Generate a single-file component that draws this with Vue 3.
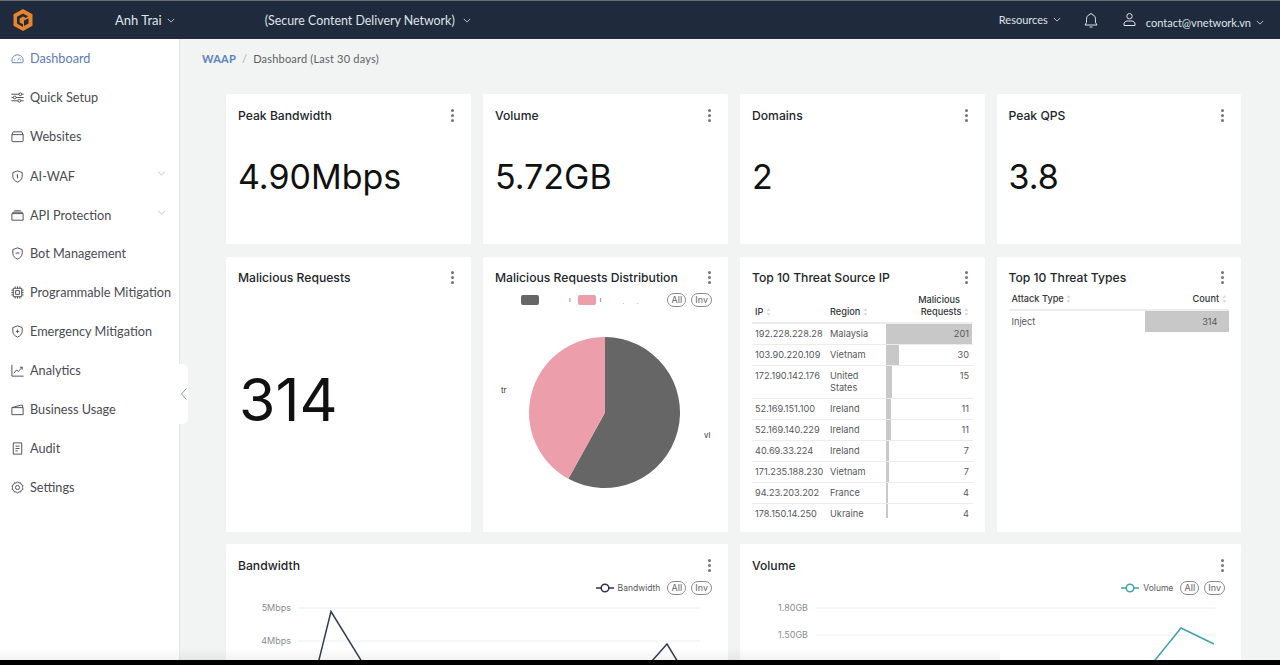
<script setup>
const navItems = [
  { label: 'Dashboard', active: true, icon: ['M2.500 12.500a6 6 0 1 1 11 0z', 'M8 10l2.500-3', 'M4.500 9.500h1', 'M10.800 9.500h1'] },
  { label: 'Quick Setup', icon: ['M1.500 4.500h8', 'M12.500 4.500h2', 'M1.500 8h2', 'M6.500 8h8', 'M1.500 11.500h7', 'M11.500 11.500h3', 'M11 3a1.500 1.500 0 1 0 0 3 1.500 1.500 0 0 0 0-3z', 'M5 6.500a1.500 1.500 0 1 0 0 3 1.500 1.500 0 0 0 0-3z', 'M10 10a1.500 1.500 0 1 0 0 3 1.500 1.500 0 0 0 0-3z'] },
  { label: 'Websites', icon: ['M2 6h12v6.500a1 1 0 0 1-1 1H3a1 1 0 0 1-1-1z', 'M2 6l1.500-3h9L14 6'] },
  { label: 'AI-WAF', caret: true, icon: ['M8 2l5 1.800v4c0 3-2.200 5-5 6.200-2.800-1.200-5-3.200-5-6.200v-4z', 'M7.200 6.500L8 6v4'] },
  { label: 'API Protection', caret: true, icon: ['M2 6h12v7H2z', 'M3 6V4.500h10V6', 'M4.500 3h7'] },
  { label: 'Bot Management', icon: ['M8 2l5 1.800v4c0 3-2.200 5-5 6.200-2.800-1.200-5-3.200-5-6.200v-4z', 'M6 7.500h4'] },
  { label: 'Programmable Mitigation', icon: ['M3.500 3.500h9v9h-9z', 'M6 6h4v4H6z', 'M5.500 1.500v2', 'M8 1.500v2', 'M10.500 1.500v2', 'M5.500 12.500v2', 'M8 12.500v2', 'M10.500 12.500v2', 'M1.500 5.500h2', 'M1.500 8h2', 'M1.500 10.500h2', 'M12.500 5.500h2', 'M12.500 8h2', 'M12.500 10.500h2'] },
  { label: 'Emergency Mitigation', icon: ['M8 2l5 1.800v4c0 3-2.200 5-5 6.200-2.800-1.200-5-3.200-5-6.200v-4z', 'M8 6v3.500', 'M6.200 7.800h3.600'] },
  { label: 'Analytics', icon: ['M2 2v12h12.500', 'M4 11l3-3.500 2 1.500 4-4.500', 'M10.500 4.500H13V7'] },
  { label: 'Business Usage', icon: ['M2 6h12v7.500H2z', 'M2 6l9-2.500h2.500V6'] },
  { label: 'Audit', icon: ['M3.500 2h9v12h-9z', 'M5.800 5.500h4.400', 'M5.800 8h4.400', 'M5.800 10.500h2.500'] },
  { label: 'Settings', icon: ['M8 1.800l1.300 1.500 2-.3.700 1.900 1.800.9-.5 2.200.5 2-1.800 1-.7 1.800-2-.2L8 14.200l-1.300-1.600-2 .2-.7-1.800-1.800-1 .5-2-.5-2.200 1.800-.9.700-1.900 2 .3z', 'M8 5.800a2.200 2.200 0 1 0 0 4.400 2.200 2.200 0 0 0 0-4.400z'] },
]

const stats = [
  { title: 'Peak Bandwidth', value: '4.90Mbps' },
  { title: 'Volume', value: '5.72GB' },
  { title: 'Domains', value: '2' },
  { title: 'Peak QPS', value: '3.8' },
]

const ipRows = [
  { ip: '192.228.228.28', region: 'Malaysia', count: 201 },
  { ip: '103.90.220.109', region: 'Vietnam', count: 30 },
  { ip: '172.190.142.176', region: 'United States', count: 15 },
  { ip: '52.169.151.100', region: 'Ireland', count: 11 },
  { ip: '52.169.140.229', region: 'Ireland', count: 11 },
  { ip: '40.69.33.224', region: 'Ireland', count: 7 },
  { ip: '171.235.188.230', region: 'Vietnam', count: 7 },
  { ip: '94.23.203.202', region: 'France', count: 4 },
  { ip: '178.150.14.250', region: 'Ukraine', count: 4 },
]
const barWidth = (n) => (n / 201) * 100 + '%'
</script>

<template>
  <div class="page">
    <header class="topbar">
      <svg class="logo" width="24" height="26" viewBox="0 0 24 26">
        <path d="M12 2l9.500 5.300v11.400L12 24l-9.500-5.300V7.300z" fill="#e8842c" />
        <path d="M12 6.500l5 2.800-2 1.800-3-1.600-3.400 1.900v4l3.400 1.900v2.700l-6-3.400V9.800z" fill="#1f2b3d" />
        <path d="M13 13.500l4.500-2.300v5.300L13 19z" fill="#1f2b3d" />
      </svg>
      <button class="top-btn tenant">Anh Trai
        <svg class="chev" viewBox="0 0 10 6"><path d="M1 1l4 4 4-4" /></svg>
      </button>
      <button class="top-btn product">(Secure Content Delivery Network)
        <svg class="chev" viewBox="0 0 10 6"><path d="M1 1l4 4 4-4" /></svg>
      </button>
      <div class="top-right">
        <button class="top-btn small res">Resources
          <svg class="chev" viewBox="0 0 10 6"><path d="M1 1l4 4 4-4" /></svg>
        </button>
        <svg class="bell" width="16" height="17" viewBox="0 0 16 17"><path d="M8 1.500a1 1 0 0 1 1 1c2.500.500 3.500 2.500 3.500 5v3l1.500 2.500H2L3.500 10.500v-3c0-2.500 1-4.500 3.500-5a1 1 0 0 1 1-1zM6.500 15h3" /></svg>
        <svg class="user" width="15" height="15" viewBox="0 0 15 15"><path d="M7.500 1.500a2.700 2.700 0 1 0 0 5.400 2.700 2.700 0 0 0 0-5.400zM2 13.500v-1.500c0-1.500 1.500-3 3-3h5c1.500 0 3 1.500 3 3v1.500z" /></svg>
        <button class="top-btn small mail">contact@vnetwork.vn
          <svg class="chev" viewBox="0 0 10 6"><path d="M1 1l4 4 4-4" /></svg>
        </button>
      </div>
    </header>

    <div class="body">
      <nav class="sidebar">
        <a v-for="item in navItems" :key="item.label" class="nav-item" :class="{ active: item.active, 'has-caret': item.caret }">
          <svg class="nav-icon" viewBox="0 0 16 16"><path v-for="d in item.icon" :key="d" :d="d" /></svg>
          <span class="nav-label">{{ item.label }}</span>
          <svg v-if="item.caret" class="nav-caret" viewBox="0 0 10 6"><path d="M1 1l4 4 4-4" /></svg>
        </a>
        <div class="collapse">
          <svg width="6" height="12" viewBox="0 0 6 12"><path d="M5.500 .500L.500 6l5 5.500" /></svg>
        </div>
      </nav>

      <main class="main">
        <div class="crumbs">
          <span class="crumb-root">WAAP</span>
          <span class="crumb-sep">/</span>
          <span class="crumb-cur">Dashboard (Last 30 days)</span>
        </div>

        <div class="grid">
          <section v-for="s in stats" :key="s.title" class="card stat">
            <div class="card-head"><h3>{{ s.title }}</h3><span class="kebab"><i /><i /><i /></span></div>
            <div class="stat-value">{{ s.value }}</div>
          </section>

          <section class="card tall">
            <div class="card-head"><h3>Malicious Requests</h3><span class="kebab"><i /><i /><i /></span></div>
            <div class="big-value">314</div>
          </section>

          <section class="card tall">
            <div class="card-head"><h3>Malicious Requests Distribution</h3><span class="kebab"><i /><i /><i /></span></div>
            <div class="legend pie-legend">
              <span class="swatch gray" />
              <span class="tick first">ı</span>
              <span class="swatch pink" />
              <span class="tick">ı</span>
              <span class="tick faint one">.</span>
              <span class="tick faint two">.</span>
              <span class="legend-spacer" />
              <span class="pill">All</span>
              <span class="pill">Inv</span>
            </div>
            <svg class="pie" width="221" height="200" viewBox="0 0 221 200">
              <path d="M110 14A75.500 75.500 0 1 1 73.400 155.800L110 89.500z" fill="#666666" />
              <path d="M110 14A75.500 75.500 0 0 0 73.400 155.800L110 89.500z" fill="#ec9fab" />
              <text x="6" y="70" class="pie-label">tr</text>
              <text x="209" y="115" class="pie-label">vl</text>
            </svg>
          </section>

          <section class="card tall">
            <div class="card-head"><h3>Top 10 Threat Source IP</h3><span class="kebab"><i /><i /><i /></span></div>
            <div class="table ip-table">
              <div class="tr th">
                <div class="td c-ip">IP <svg class="sort" viewBox="0 0 6 9"><path d="M3 0l2.500 3h-5zM3 9L.500 6h5z" /></svg></div>
                <div class="td c-region">Region <svg class="sort" viewBox="0 0 6 9"><path d="M3 0l2.500 3h-5zM3 9L.500 6h5z" /></svg></div>
                <div class="td c-count"><span class="head-line">Malicious</span><br />Requests <svg class="sort" viewBox="0 0 6 9"><path d="M3 0l2.500 3h-5zM3 9L.500 6h5z" /></svg></div>
              </div>
              <div v-for="r in ipRows" :key="r.ip" class="tr">
                <div class="td c-ip">{{ r.ip }}</div>
                <div class="td c-region">{{ r.region }}</div>
                <div class="td c-count">
                  <span class="bar" :style="{ width: barWidth(r.count) }" />
                  <span class="num">{{ r.count }}</span>
                </div>
              </div>
            </div>
          </section>

          <section class="card tall">
            <div class="card-head"><h3>Top 10 Threat Types</h3><span class="kebab"><i /><i /><i /></span></div>
            <div class="table type-table">
              <div class="tr th">
                <div class="td c-type">Attack Type <svg class="sort" viewBox="0 0 6 9"><path d="M3 0l2.500 3h-5zM3 9L.500 6h5z" /></svg></div>
                <div class="td c-count2">Count <svg class="sort" viewBox="0 0 6 9"><path d="M3 0l2.500 3h-5zM3 9L.500 6h5z" /></svg></div>
              </div>
              <div class="tr">
                <div class="td c-type">Inject</div>
                <div class="td c-count2"><span class="bar full" /><span class="num">314</span></div>
              </div>
            </div>
          </section>

          <section class="card wide">
            <div class="card-head"><h3>Bandwidth</h3><span class="kebab"><i /><i /><i /></span></div>
            <div class="legend chart-legend">
              <svg width="18" height="10" viewBox="0 0 18 10"><path d="M0 5h5M13 5h5" stroke="#2c3350" stroke-width="1.500" /><circle cx="9" cy="5" r="3.800" fill="#fff" stroke="#2c3350" stroke-width="1.500" /></svg>
              <span class="legend-text">Bandwidth</span>
              <span class="pill">All</span>
              <span class="pill">Inv</span>
            </div>
            <svg class="chart" width="486" height="70" viewBox="0 0 486 70">
              <line x1="60" y1="8" x2="462" y2="8" class="grid-line" />
              <line x1="60" y1="41" x2="462" y2="41" class="grid-line" />
              <text x="53" y="11" class="axis">5Mbps</text>
              <text x="53" y="44" class="axis">4Mbps</text>
              <polyline points="76,80 93,11.500 129,70" class="line navy" />
              <polyline points="406,70 429,44 446,72" class="line navy" />
            </svg>
          </section>

          <section class="card wide">
            <div class="card-head"><h3>Volume</h3><span class="kebab"><i /><i /><i /></span></div>
            <div class="legend chart-legend">
              <svg width="18" height="10" viewBox="0 0 18 10"><path d="M0 5h5M13 5h5" stroke="#3ea2ad" stroke-width="1.500" /><circle cx="9" cy="5" r="3.800" fill="#fff" stroke="#3ea2ad" stroke-width="1.500" /></svg>
              <span class="legend-text">Volume</span>
              <span class="pill">All</span>
              <span class="pill">Inv</span>
            </div>
            <svg class="chart" width="476" height="70" viewBox="0 0 476 70">
              <line x1="64" y1="8" x2="463" y2="8" class="grid-line" />
              <line x1="64" y1="35" x2="463" y2="35" class="grid-line" />
              <text x="56" y="11" class="axis">1.80GB</text>
              <text x="56" y="38" class="axis">1.50GB</text>
              <polyline points="395,70 429,28 462,44" class="line teal" />
            </svg>
          </section>
        </div>
      </main>
    </div>
    <div class="bottom-strip" />
  </div>
</template>

<style>
html, body { margin: 0; padding: 0; overflow: hidden; }
</style>

<style scoped>
.page { width: 1280px; height: 665px; display: flex; flex-direction: column; overflow: hidden; font-family: Inter, "Liberation Sans", sans-serif; background: #f2f4f4; }

.topbar { flex: 0 0 39px; box-sizing: border-box; height: 39px; background: #1f2b3d; border-top: 1px solid #6b6f75; display: flex; align-items: center; color: #dfe3e8; padding-left: 11px; font-family: Lato, "Open Sans", sans-serif; }
.logo { flex: none; margin-top: -1px; }
.top-btn { background: none; border: 0; padding: 0; color: inherit; font: inherit; font-size: 13px; display: inline-flex; align-items: center; gap: 5px; white-space: nowrap; }
.tenant { margin-left: 80px; }
.product { margin-left: 90px; gap: 8px; font-size: 12.400px; }
.chev { width: 8px; height: 5px; fill: none; stroke: currentColor; stroke-width: 1; }
.top-right { margin-left: auto; padding-right: 16px; display: flex; align-items: center; }
.small { font-size: 11px; }
.res { margin-top: -2px; }
.bell { margin-left: 22px; fill: none; stroke: #dfe3e8; stroke-width: 1; }
.user { margin-left: 23px; fill: none; stroke: #dfe3e8; stroke-width: 1; margin-top: -2px; }
.mail { margin-left: 9px; margin-top: 4px; }

.body { flex: 1; min-height: 0; display: flex; }
.sidebar { position: relative; flex: 0 0 180px; box-sizing: border-box; width: 180px; background: #fff; border-right: 1px solid #e6e9e9; font-family: Lato, "Open Sans", sans-serif; z-index: 1; }
.nav-item { box-sizing: border-box; height: 39px; padding-bottom: 1px; display: flex; align-items: center; padding-left: 10px; color: #4a4c52; font-size: 12.700px; white-space: nowrap; }
.nav-item.has-caret { padding-bottom: 0; padding-top: 1px; }
.nav-item.active { color: #5d7cb3; }
.nav-icon { width: 15px; height: 15px; flex: none; margin-right: 5px; fill: none; stroke: currentColor; stroke-width: 1; }
.nav-label { flex: none; }
.nav-caret { width: 9px; height: 5px; margin-left: auto; margin-right: 13px; margin-top: -6px; fill: none; stroke: #b4b8bc; stroke-width: 1; }
.collapse { position: absolute; left: 179px; top: 325px; width: 9px; height: 60px; background: #fff; border-radius: 0 6px 6px 0; display: flex; align-items: center; justify-content: center; }
.collapse svg { fill: none; stroke: #8b9096; stroke-width: 1; }

.main { flex: 1; min-width: 0; overflow: hidden; box-sizing: border-box; padding-left: 22px; }
.crumbs { height: 55px; padding-top: 13px; box-sizing: border-box; font-size: 11px; line-height: 14px; display: flex; gap: 6px; font-family: Lato, "Open Sans", sans-serif; letter-spacing: .2px; }
.crumb-root { color: #5d7fbc; font-weight: 700; }
.crumb-sep { color: #a8adb2; }
.crumb-cur { color: #5c5f64; }

.grid { margin-left: 24px; width: 1015px; display: grid; grid-template-columns: 245px 245px 244.500px 244.500px; column-gap: 12px; row-gap: 12.500px; grid-template-rows: 150px 275px 200px; }
.card { background: #fff; border-radius: 2px; box-sizing: border-box; padding: 12px; min-width: 0; display: flex; flex-direction: column; overflow: hidden; }
.wide { grid-column: span 2; }
.card-head { display: flex; align-items: center; justify-content: space-between; height: 18px; flex: none; }
.card-head h3 { margin: 0; padding-top: 1px; font-size: 12.150px; line-height: 18px; font-weight: 500; color: #23262b; white-space: nowrap; }
.kebab { display: flex; flex-direction: column; gap: 2px; margin-right: 5px; }
.kebab i { display: block; width: 3px; height: 3px; border-radius: 50%; background: #777; }
.stat-value { margin-top: 31px; font-size: 34px; line-height: 44px; color: #111; }
.big-value { flex: 1; display: flex; align-items: center; padding-bottom: 8px; padding-left: 1px; font-size: 59px; color: #111; }

.legend { display: flex; align-items: center; flex: none; }
.pie-legend { height: 14px; margin-top: 6px; padding-left: 26px; padding-right: 4px; }
.swatch { width: 18px; height: 10px; border-radius: 2px; }
.gray { background: #666; }
.pink { background: #ec9fab; }
.tick { font-size: 7px; color: #555; margin-left: 4px; }
.tick.first { margin-left: 30px; margin-right: 7px; }
.tick.faint { color: #aaa; margin-top: 4px; }
.tick.faint.one { margin-left: 21px; }
.tick.faint.two { margin-left: 12px; }
.legend-spacer { flex: 1; }
.pill { box-sizing: border-box; height: 14px; min-width: 19px; padding: 0 3px; margin-left: 5px; border: 1px solid #8a8a8a; border-radius: 7px; font-size: 9px; line-height: 12px; color: #666; text-align: center; }
.pie { flex: none; margin-top: 16px; }
.pie-label { font-size: 8px; fill: #333; }

.table { margin-top: 3px; font-size: 9.200px; color: #55585c; overflow: hidden; }
.ip-table { height: 228px; }
.tr { display: flex; border-bottom: 1px solid #ececec; }
.th { color: #33363a; font-weight: 500; border-bottom: 2px solid #ededed; align-items: flex-end; }
.td { box-sizing: border-box; padding: 4px 3px; line-height: 12px; position: relative; }
.c-ip { flex: 0 0 75px; white-space: nowrap; }
.c-region { flex: 0 0 59px; }
.c-count { flex: 0 0 86px; text-align: right; padding-right: 3px; }
.head-line { margin-right: 9px; }
.c-type { flex: 0 0 136px; }
.c-count2 { flex: 0 0 85px; text-align: right; padding-right: 5px; }
.type-table { margin-top: 2px; }
.type-table .td { padding: 4px 3px; }
.type-table .tr:not(.th) { border-bottom: 0; }
.type-table .tr:not(.th) .td { padding: 5px 3px 4px; }
.type-table .tr:not(.th) .c-count2 { padding-right: 12px; }
.sort { width: 5px; height: 8px; fill: #d5d7da; vertical-align: -1px; }
.bar { position: absolute; left: 0; top: 0; bottom: 0; background: #c8c8c8; }
.bar.full { width: 100%; }
.num { position: relative; }

.chart-legend { height: 14px; margin-top: 7px; justify-content: flex-end; padding-right: 4px; }
.legend-text { font-size: 8.500px; color: #55585c; margin: 0 2px 0 4px; }
.chart { flex: none; margin-top: 5px; }
.grid-line { stroke: #eceef0; stroke-width: 1; }
.axis { font-size: 9px; fill: #8a8d92; text-anchor: end; }
.line { fill: none; stroke-width: 1.500; }
.navy { stroke: #353c58; }
.teal { stroke: #3ea2ad; }

.bottom-strip { flex: 0 0 5px; background: #000; position: relative; z-index: 2; }
.bottom-strip::before { content: ""; position: absolute; left: 0; right: 280px; bottom: 5px; height: 12px; background: linear-gradient(to bottom, rgba(0,0,0,0), rgba(0,0,0,.05)); }
</style>
